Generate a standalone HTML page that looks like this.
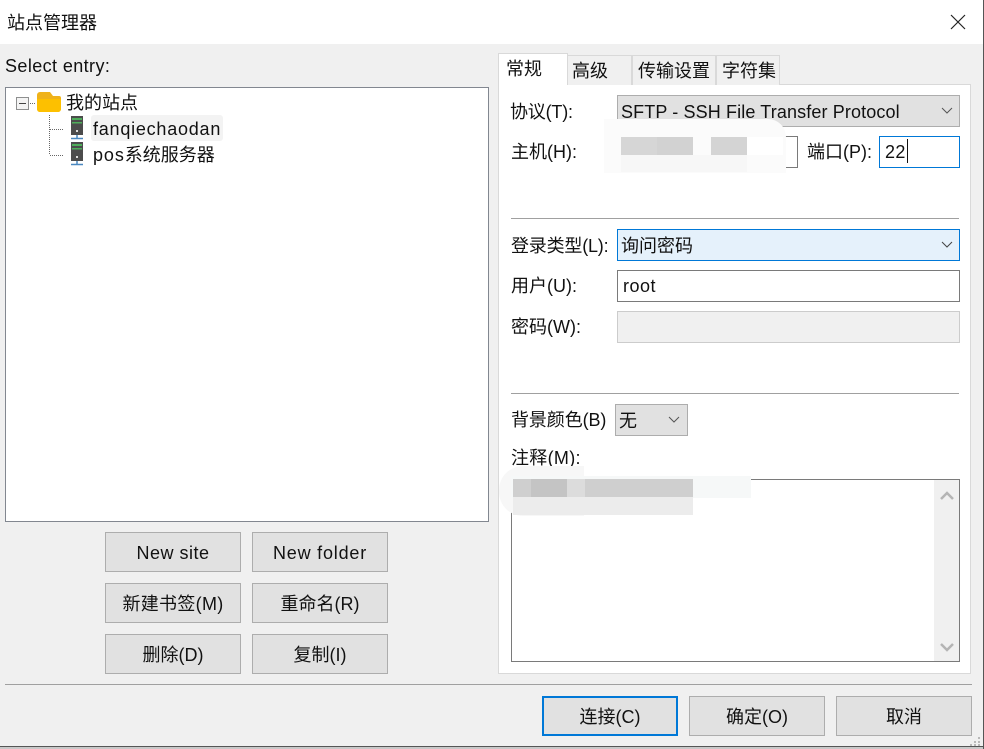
<!DOCTYPE html>
<html><head><meta charset="utf-8">
<style>
html,body{margin:0;padding:0;width:984px;height:749px;overflow:hidden;background:#f0f0f0}
body{position:relative;font-family:"Liberation Sans","Noto Sans CJK SC",sans-serif;font-size:18px;color:#111}
.a{position:absolute;box-sizing:border-box}
.t{position:absolute;white-space:nowrap;line-height:24px;margin-top:1px}
.btn{position:absolute;box-sizing:border-box;width:136px;height:40px;background:#e1e1e1;border:1px solid #adadad;text-align:center;line-height:40px;white-space:nowrap}
.combo{position:absolute;box-sizing:border-box;border:1px solid #adadad;background:#e1e1e1;line-height:32px;padding-left:3px;white-space:nowrap}
.inp{position:absolute;box-sizing:border-box;border:1px solid #7a7a7a;background:#fff;line-height:30px;padding-left:5px}
.sep{position:absolute;height:1px;background:#a0a0a0}
.tab{position:absolute;box-sizing:border-box;background:#f0f0f0;border:1px solid #d9d9d9;border-bottom:0;line-height:30px;white-space:nowrap}
svg{position:absolute;overflow:visible}
</style></head><body>
<div class="a" style="left:0;top:0;width:984px;height:44px;background:#fff"></div>
<div class="t" style="left:7px;top:10px">站点管理器</div>
<svg style="left:950px;top:14px" width="16" height="16"><path d="M1 1L15 15M15 1L1 15" stroke="#222" stroke-width="1.2" fill="none"/></svg>

<div class="t" style="left:5px;top:53px;letter-spacing:.4px">Select entry:</div>
<div class="a" style="left:5px;top:87px;width:484px;height:435px;background:#fff;border:1px solid #828790"></div>
<svg style="left:0;top:0" width="100" height="170">
<rect x="16.5" y="97.5" width="12" height="12" fill="#f4f4f4" stroke="#8e8f8f"/>
<path d="M19 103.5H26" stroke="#444"/>
<path d="M30 103.5H36M49.5 115V155M50 129.500H64M50 155.500H64" stroke="#666" stroke-dasharray="1 1" fill="none"/>
<path d="M37 95a3 3 0 0 1 3-3h10l3 4h6a2 2 0 0 1 2 2v11a3 3 0 0 1-3 3H40a3 3 0 0 1-3-3z" fill="#efb21a"/>
<path d="M37 99h24v10a3 3 0 0 1-3 3H40a3 3 0 0 1-3-3z" fill="#fdc000"/>
<g><rect x="71" y="116" width="12" height="19" fill="#4c4c4c"/><rect x="72" y="118" width="10" height="2" fill="#4fae5b"/><rect x="72" y="122" width="10" height="1.500" fill="#4fae5b"/><rect x="76" y="130" width="2" height="2" fill="#ddd"/><path d="M77 135v3M71 138.500h12" stroke="#4a88c0" stroke-width="1.500"/></g>
<g><rect x="71" y="142" width="12" height="19" fill="#4c4c4c"/><rect x="72" y="144" width="10" height="2" fill="#4fae5b"/><rect x="72" y="148" width="10" height="1.500" fill="#4fae5b"/><rect x="76" y="156" width="2" height="2" fill="#ddd"/><path d="M77 161v3M71 164.500h12" stroke="#4a88c0" stroke-width="1.500"/></g>
</svg>
<div class="t" style="left:66px;top:90px">我的站点</div>
<div class="a" style="left:91px;top:115px;width:132px;height:26px;background:#f3f3f3;border-radius:3px"></div>
<div class="t" style="left:93px;top:116px;letter-spacing:.77px">fanqiechaodan</div>
<div class="t" style="left:93px;top:142px;letter-spacing:.9px">pos<span style="letter-spacing:0">系统服务器</span></div>

<div class="btn" style="left:105px;top:532px;letter-spacing:.5px">New site</div>
<div class="btn" style="left:252px;top:532px;letter-spacing:.8px">New folder</div>
<div class="btn" style="left:105px;top:583px;letter-spacing:.3px">新建书签(M)</div>
<div class="btn" style="left:252px;top:583px">重命名(R)</div>
<div class="btn" style="left:105px;top:634px">删除(D)</div>
<div class="btn" style="left:252px;top:634px">复制(I)</div>

<div class="a" style="left:498px;top:84px;width:473px;height:590px;background:#fff;border:1px solid #d9d9d9"></div>
<div class="tab" style="left:567px;top:55px;width:65px;height:30px;padding-left:4px">高级</div>
<div class="tab" style="left:632px;top:55px;width:84px;height:30px;padding-left:5px">传输设置</div>
<div class="tab" style="left:716px;top:55px;width:64px;height:30px;padding-left:5px">字符集</div>
<div class="tab" style="left:498px;top:53px;width:70px;height:32px;background:#fff;padding-left:7px;border-bottom:0">常规</div>

<div class="t" style="left:510px;top:99px;letter-spacing:-.2px">协议(T):</div>
<div class="combo" style="left:617px;top:95px;width:343px;height:32px;letter-spacing:.12px">SFTP - SSH File Transfer Protocol</div>
<svg style="left:941px;top:107px" width="12" height="8"><path d="M1 1L6 6L11 1" stroke="#555" fill="none"/></svg>

<div class="t" style="left:511px;top:139px">主机(H):</div>
<div class="inp" style="left:617px;top:136px;width:181px;height:32px"></div>
<div class="a" style="left:604px;top:119px;width:182px;height:54px;background:#fbfbfb;border-radius:0 18px 0 0"></div>
<div class="a" style="left:621px;top:137px;width:36px;height:18px;background:#d6d6d6"></div>
<div class="a" style="left:657px;top:137px;width:36px;height:18px;background:#d2d2d2"></div>
<div class="a" style="left:711px;top:137px;width:36px;height:18px;background:#d4d4d4"></div>
<div class="a" style="left:747px;top:137px;width:36px;height:18px;background:#fff"></div>
<div class="a" style="left:621px;top:155px;width:126px;height:17px;background:#f7f7f7"></div>
<div class="t" style="left:807px;top:139px">端口(P):</div>
<div class="inp" style="left:879px;top:136px;width:81px;height:32px;border-color:#0078d7;color:#111;letter-spacing:.4px">22</div>
<div class="a" style="left:907px;top:139px;width:1px;height:24px;background:#111"></div>

<div class="sep" style="left:511px;top:218px;width:448px"></div>
<div class="t" style="left:511px;top:233px;letter-spacing:-.2px">登录类型(L):</div>
<div class="combo" style="left:617px;top:229px;width:343px;height:32px;background:#e5f1fb;border-color:#0078d7">询问密码</div>
<svg style="left:941px;top:241px" width="12" height="8"><path d="M1 1L6 6L11 1" stroke="#444" fill="none"/></svg>
<div class="t" style="left:511px;top:273px">用户(U):</div>
<div class="inp" style="left:617px;top:270px;width:343px;height:32px;letter-spacing:.5px">root</div>
<div class="t" style="left:511px;top:314px">密码(W):</div>
<div class="a" style="left:617px;top:311px;width:343px;height:32px;background:#f0f0f0;border:1px solid #ccc"></div>

<div class="sep" style="left:511px;top:393px;width:448px"></div>
<div class="t" style="left:511px;top:407px;letter-spacing:-.1px">背景颜色(B)</div>
<div class="combo" style="left:615px;top:404px;width:73px;height:32px">无</div>
<svg style="left:668px;top:416px" width="12" height="8"><path d="M1 1L6 6L11 1" stroke="#555" fill="none"/></svg>
<div class="t" style="left:511px;top:445px;letter-spacing:.3px">注释(M):</div>

<div class="inp" style="left:511px;top:479px;width:449px;height:183px"></div>
<div class="a" style="left:934px;top:480px;width:25px;height:181px;background:#f0f0f0"></div>
<svg style="left:939px;top:490px" width="16" height="12"><path d="M2 9L8 3L14 9" stroke="#b4b4b4" stroke-width="2.500" fill="none"/></svg>
<svg style="left:939px;top:641px" width="16" height="12"><path d="M2 3L8 9L14 3" stroke="#b4b4b4" stroke-width="2.500" fill="none"/></svg>
<div class="a" style="left:499px;top:466px;width:85px;height:50px;background:#f7f7f7;border-radius:24px 0 0 24px"></div>
<div class="a" style="left:511px;top:476px;width:240px;height:22px;background:#f6f8f8"></div>
<div class="a" style="left:513px;top:479px;width:180px;height:18px;background:#cfcfcf"></div>
<div class="a" style="left:531px;top:479px;width:36px;height:18px;background:#c4c4c4"></div>
<div class="a" style="left:567px;top:479px;width:18px;height:18px;background:#dcdcdc"></div>
<div class="a" style="left:513px;top:497px;width:180px;height:18px;background:#ececec"></div>

<div class="sep" style="left:5px;top:684px;width:967px"></div>
<div class="btn" style="left:542px;top:696px;border:2px solid #0078d7;line-height:38px">连接(C)</div>
<div class="btn" style="left:689px;top:696px">确定(O)</div>
<div class="btn" style="left:836px;top:696px">取消</div>
<div class="a" style="left:0;top:746px;width:984px;height:3px;background:#c8c8c8;border-top:1px solid #555"></div>
<div class="a" style="left:983px;top:0;width:1px;height:749px;background:#555"></div>
<svg style="left:969px;top:736px" width="13" height="10"><path d="M9 1h2v2h-2zM5 5h2v2h-2zM9 5h2v2h-2zM1 8h2v2h-2zM5 8h2v2h-2zM9 8h2v2h-2z" fill="#b8b8b8"/></svg>
</body></html>
